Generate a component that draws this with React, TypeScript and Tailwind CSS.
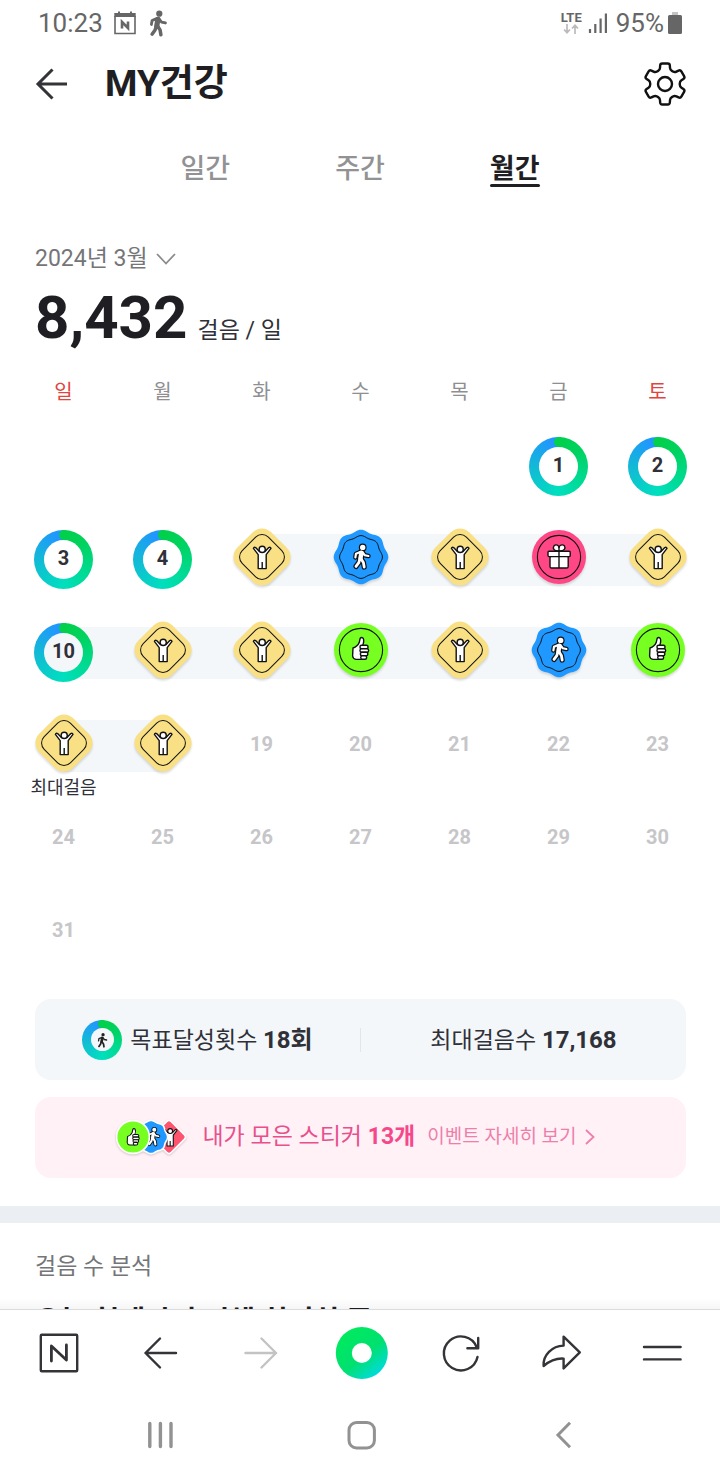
import React, { useState } from "react";

type StickerName = "cheer" | "walk" | "thumb" | "gift";
type Point = [number, number];

interface DayItem {
  day: number;
  ring?: boolean;
  sticker?: StickerName;
  band?: "left" | "right" | "full";
  label?: string;
}

const weekdays = ["일", "월", "화", "수", "목", "금", "토"];

const weeks: (DayItem | null)[][] = [
  [null, null, null, null, null, { day: 1, ring: true }, { day: 2, ring: true }],
  [
    { day: 3, ring: true },
    { day: 4, ring: true },
    { day: 5, sticker: "cheer", band: "right" },
    { day: 6, sticker: "walk", band: "full" },
    { day: 7, sticker: "cheer", band: "full" },
    { day: 8, sticker: "gift", band: "full" },
    { day: 9, sticker: "cheer", band: "left" },
  ],
  [
    { day: 10, ring: true, band: "right" },
    { day: 11, sticker: "cheer", band: "full" },
    { day: 12, sticker: "cheer", band: "full" },
    { day: 13, sticker: "thumb", band: "full" },
    { day: 14, sticker: "cheer", band: "full" },
    { day: 15, sticker: "walk", band: "full" },
    { day: 16, sticker: "thumb", band: "left" },
  ],
  [
    { day: 17, sticker: "cheer", band: "right", label: "최대걸음" },
    { day: 18, sticker: "cheer", band: "left" },
    { day: 19 },
    { day: 20 },
    { day: 21 },
    { day: 22 },
    { day: 23 },
  ],
  [24, 25, 26, 27, 28, 29, 30].map((day) => ({ day })),
  [{ day: 31 }, null, null, null, null, null, null],
];

const bandClass = {
  left: "left-0 right-1/2",
  right: "left-1/2 right-0",
  full: "inset-x-0",
};

const polar = (radius: number, deg: number): Point => {
  const a = (deg * Math.PI) / 180;
  return [radius * Math.sin(a), -radius * Math.cos(a)];
};

const roundedPath = (points: Point[], cut: number) => {
  const n = points.length;
  const towards = (a: Point, b: Point): Point => {
    const len = Math.hypot(b[0] - a[0], b[1] - a[1]);
    const t = Math.min(cut / len, 0.5);
    return [a[0] + (b[0] - a[0]) * t, a[1] + (b[1] - a[1]) * t];
  };
  return (
    points
      .map((p, i) => {
        const from = towards(p, points[(i + n - 1) % n]);
        const to = towards(p, points[(i + 1) % n]);
        return `${i ? "L" : "M"}${from} Q${p} ${to}`;
      })
      .join(" ") + "Z"
  );
};

const gearPath = roundedPath(
  [0, 60, 120, 180, 240, 300].flatMap((a) => [
    polar(21, a - 13),
    polar(21, a + 13),
    polar(15, a + 20),
    polar(15, a + 40),
  ]),
  2
);

const flowerPath = (radius: number, wave: number) =>
  Array.from({ length: 120 }, (_, i) => polar(radius + wave * Math.cos((i * 24 * Math.PI) / 180), i * 3))
    .map((p, i) => `${i ? "L" : "M"}${p}`)
    .join(" ") + "Z";

const WalkerShape = ({ color, grow = 0 }: { color: string; grow?: number }) => (
  <g stroke={color} fill="none" strokeLinecap="round" strokeLinejoin="round">
    <circle cx="1.7" cy="-9.6" r={2.7 + grow} fill={color} stroke="none" />
    <path d="M0.4 -4.4L-0.6 1.6" strokeWidth={4.4 + grow * 2} />
    <path d="M-0.8 -5L-5 -3.2L-5.6 0.4M1.4 -4.8L3.8 -1.8L7.4 -1" strokeWidth={2.2 + grow * 2} />
    <path d="M-1.2 2L-2.2 5.6L-5 9.4M0.2 2L2.4 5.4L3.2 10" strokeWidth={2.8 + grow * 2} />
  </g>
);

const Walker = () => (
  <>
    <WalkerShape color="#111" grow={1.2} />
    <WalkerShape color="#fff" />
  </>
);

const Cheer = () => (
  <g fill="#fff" stroke="#111" strokeWidth="1.4" strokeLinejoin="round">
    <path d="M-8.6 -8.6Q-8 -10.4 -6.4 -9.4L-2.6 -5.4H3L6.8 -9.4Q8.4 -10.4 9 -8.6L4.2 -2.4V11.6H-3.8V-2.4Z" />
    <path d="M0.2 5V11.6" />
    <circle cx="0.2" cy="-7.6" r="3.1" />
  </g>
);

const Thumb = () => (
  <g fill="#fff" stroke="#111" strokeWidth="1.4" strokeLinejoin="round">
    <path d="M-8 -2Q-3.4 -3.4 -1.8 -7.4L-0.8 -11.8Q0.4 -13.2 2.2 -11.8Q3.4 -9.4 1.8 -4.6V9.4H-5Q-8 9 -8.4 6Z" />
    <rect x="-1" y="-4.8" width="8" height="3.6" rx="1.5" />
    <rect x="-1" y="-1.2" width="8.6" height="3.5" rx="1.5" />
    <rect x="-0.6" y="2.3" width="7.4" height="3.5" rx="1.5" />
    <rect x="-0.2" y="5.8" width="5.8" height="3.4" rx="1.5" />
  </g>
);

const Gift = () => (
  <g fill="#fff" stroke="#111" strokeWidth="1.4" strokeLinejoin="round">
    <path d="M0 -6C-5.6 -5.6 -6.4 -9 -5 -11.2C-3 -13 0 -11.8 0 -9.6C0 -11.8 3.4 -13 5.4 -11.2C6.8 -9 5.6 -5.6 0 -6Z" />
    <path d="M0 -11V-6" />
    <rect x="-9" y="-1" width="18.2" height="12" rx="1.6" />
    <rect x="-11" y="-5.8" width="22.2" height="5.4" rx="1" />
    <path d="M0 -5.8V11" />
  </g>
);

const StickerArt = ({ name }: { name: StickerName }) => {
  if (name === "cheer")
    return (
      <>
        <rect x="-24" y="-24" width="48" height="48" rx="13" fill="#f9e084" transform="rotate(45)" />
        <rect
          x="-18.5"
          y="-18.5"
          width="37"
          height="37"
          rx="9"
          fill="none"
          stroke="#111"
          transform="rotate(45)"
        />
        <Cheer />
      </>
    );
  if (name === "walk")
    return (
      <>
        <path d={flowerPath(26.2, 1.1)} fill="#1f98ff" />
        <path d={flowerPath(20.6, 0.8)} fill="none" stroke="#111" />
        <Walker />
      </>
    );
  return (
    <>
      <circle r="27" fill={name === "thumb" ? "#77ff22" : "#ff4785"} />
      <circle r="21.6" fill="none" stroke="#111" strokeWidth="1.1" />
      {name === "thumb" ? <Thumb /> : <Gift />}
    </>
  );
};

const Sticker = ({ name }: { name: StickerName }) => (
  <svg
    viewBox="-30 -30 60 60"
    className="relative mb-[6px] size-[60px] drop-shadow-[0_2px_1px_rgba(0,0,0,0.14)]"
    aria-hidden="true"
  >
    <StickerArt name={name} />
  </svg>
);

const ringFill =
  "relative flex items-center justify-center rounded-full bg-[conic-gradient(#00d04c_0deg,#00d25e_50deg,#00d98a_110deg,#00dfbe_180deg,#12b9d6_270deg,#2196ff_345deg,#2196ff_360deg)]";

const Ring = ({ day, tinted }: { day: number; tinted?: boolean }) => (
  <div className={`${ringFill} size-[59px]`}>
    <span className="absolute top-0 left-1/2 size-[10px] -translate-x-1/2 rounded-full bg-[#00d04c]" />
    <span
      className={`flex size-[39px] items-center justify-center rounded-full pb-[3px] text-xl font-bold text-[#303038] ${tinted ? "bg-[#f3f7fa]" : "bg-white"}`}
    >
      {day}
    </span>
  </div>
);

const Day = ({ item }: { item: DayItem | null }) => {
  if (!item) return null;
  return (
    <div className="relative flex h-full items-center justify-center">
      {item.band && <div className={`absolute h-[52px] bg-[#f3f7fa] ${bandClass[item.band]}`} />}
      {item.ring && <Ring day={item.day} tinted={!!item.band} />}
      {item.sticker && <Sticker name={item.sticker} />}
      {!item.ring && !item.sticker && (
        <span className="pb-1 text-xl font-bold text-[#c6c6c9]">{item.day}</span>
      )}
      {item.label && (
        <span className="absolute top-[79px] text-lg leading-5 whitespace-nowrap text-[#303038]">
          {item.label}
        </span>
      )}
    </div>
  );
};

const StatusBar = () => (
  <div className="flex h-[46px] shrink-0 items-center justify-between pr-[38px] pl-[38px] text-[26px] text-[#666]">
    <div className="flex items-center">
      <span>10:23</span>
      <svg viewBox="0 0 22 24" className="ml-[11px] h-6 w-[22px]" aria-hidden="true">
        <path d="M1 5V22.5H21V5" fill="none" stroke="#666" strokeWidth="1.6" />
        <path d="M0.3 2H4V0.5H6V2H16V0.5H18V2H21.7V6H0.3Z" fill="#666" />
        <path d="M8 17.5V11L14 17V10.5" fill="none" stroke="#666" strokeWidth="2.6" />
      </svg>
      <svg viewBox="-8 -13 17 25" className="ml-3 h-[27px] w-5" aria-hidden="true">
        <WalkerShape color="#666" grow={0.2} />
      </svg>
    </div>
    <div className="flex items-center">
      <div className="mr-[6px] flex flex-col items-center">
        <span className="text-[13px] leading-3 font-bold">LTE</span>
        <svg viewBox="0 0 16 10" className="h-[10px] w-4" fill="none" stroke="#bbb" strokeWidth="1.7" aria-hidden="true">
          <path d="M4 0V8.5M1 5.5L4 8.7L7 5.5M12 10V1.5M9 4.5L12 1.3L15 4.5" />
        </svg>
      </div>
      <svg viewBox="0 0 20 22" className="mr-2 h-[22px] w-5" stroke="#666" strokeWidth="2.2" aria-hidden="true">
        <path d="M2 21V17M7.3 21V12M12.6 21V6.5M17.9 21V1.5" />
      </svg>
      <span>95%</span>
      <svg viewBox="0 0 14 22" className="ml-1 h-[22px] w-[14px]" aria-hidden="true">
        <path d="M4 0H10V4H4Z" fill="#c4c4c4" />
        <rect y="3" width="14" height="19" rx="1.5" fill="#666" />
      </svg>
    </div>
  </div>
);

const Header = () => (
  <header className="flex h-[76px] shrink-0 items-center pr-[33px] pl-[34px]">
    <button type="button" aria-label="뒤로">
      <svg viewBox="0 0 34 34" className="size-[34px]" fill="none" stroke="#333338" strokeWidth="3" aria-hidden="true">
        <path d="M33 17H4M18.5 2.5L4 17L18.5 31.5" />
      </svg>
    </button>
    <h1 className="ml-[37px] text-[37px] leading-10 font-bold text-[#1e1e23]">MY건강</h1>
    <button type="button" aria-label="설정" className="ml-auto">
      <svg viewBox="-22 -22 44 44" className="size-11" fill="none" stroke="#111" strokeWidth="2.4" aria-hidden="true">
        <path d={gearPath} />
        <circle r="7" />
      </svg>
    </button>
  </header>
);

const Tabs = () => {
  const [active, setActive] = useState("월간");
  return (
    <nav className="flex h-[90px] items-center justify-center gap-[105px]">
      {["일간", "주간", "월간"].map((tab) => (
        <button
          key={tab}
          type="button"
          onClick={() => setActive(tab)}
          className={`relative pt-1 text-[27px] leading-8 ${active === tab ? "font-bold text-[#1e1e23]" : "font-medium text-[#929294]"}`}
        >
          {tab}
          {active === tab && (
            <span className="absolute inset-x-0 top-[35px] h-[3px] rounded-full bg-[#1e1e23]" />
          )}
        </button>
      ))}
    </nav>
  );
};

const Calendar = () => (
  <table className="mt-3 w-full table-fixed">
    <thead>
      <tr className="h-[60px]">
        {weekdays.map((name, i) => (
          <th
            key={name}
            scope="col"
            className={`pt-[3px] text-center text-xl font-normal ${i === 0 || i === 6 ? "text-[#e0443e]" : "text-[#8f8f91]"}`}
          >
            {name}
          </th>
        ))}
      </tr>
    </thead>
    <tbody>
      {weeks.map((week, w) => (
        <tr key={w}>
          {week.map((item, d) => (
            <td key={d} className="h-[93px] p-0">
              <Day item={item} />
            </td>
          ))}
        </tr>
      ))}
    </tbody>
  </table>
);

const StickerPile = () => (
  <svg
    viewBox="0 0 72 40"
    className="h-10 w-[72px] drop-shadow-[0_1px_1px_rgba(0,0,0,0.18)]"
    aria-hidden="true"
  >
    <g transform="translate(53 20)">
      <rect x="-12.5" y="-12.5" width="25" height="25" rx="3" fill="#ff5470" stroke="#fff" strokeWidth="1.6" transform="rotate(45)" />
      <g transform="translate(1 0) scale(0.78)">
        <Cheer />
      </g>
    </g>
    <g transform="translate(35 20)">
      <path d={flowerPath(16, 0.6)} fill="#1f98ff" stroke="#fff" strokeWidth="1.6" />
      <g transform="translate(2 0) scale(0.75)">
        <Walker />
      </g>
    </g>
    <circle cx="17" cy="20" r="16.4" fill="#77ff22" stroke="#fff" strokeWidth="1.6" />
    <g transform="translate(17.5 21) scale(0.75)">
      <Thumb />
    </g>
  </svg>
);

const Summary = () => (
  <section className="mt-[21px] mr-[34px] ml-[35px] flex flex-col gap-[17px] text-[23px] text-[#303038]">
    <div className="flex h-[81px] items-center rounded-2xl bg-[#f3f7fa]">
      <div className="flex flex-1 items-center justify-center">
        <span className={`${ringFill} mr-2 size-10`}>
          <span className="absolute top-0 left-1/2 size-2 -translate-x-1/2 rounded-full bg-[#00d04c]" />
          <span className="flex size-[23px] items-center justify-center rounded-full bg-[#f3f7fa]">
            <svg viewBox="-13 -14 26 26" className="size-4" aria-hidden="true">
              <WalkerShape color="#222" />
            </svg>
          </span>
        </span>
        <span className="pt-[2px] leading-7">
          목표달성횟수 <b className="text-2xl leading-7">18회</b>
        </span>
      </div>
      <div className="h-6 w-px bg-[#e2e6ea]" />
      <div className="flex-1 pt-[2px] text-center leading-7">
        최대걸음수 <b className="text-2xl leading-7">17,168</b>
      </div>
    </div>
    <a
      href="#stickers"
      className="flex h-[81px] items-center justify-center rounded-2xl bg-[#fff1f6] pr-[10px] pb-[2px] text-[#e8508c]"
    >
      <StickerPile />
      <span className="ml-[14px] leading-7">
        내가 모은 스티커 <b className="text-[#f5488a]">13개</b>
      </span>
      <span className="ml-3 text-[19px] leading-7 text-[#ee7fab]">이벤트 자세히 보기</span>
      <svg viewBox="0 0 10 16" className="ml-2 h-4 w-[10px]" fill="none" stroke="#ee7fab" strokeWidth="1.8" aria-hidden="true">
        <path d="M1 1L8.5 8L1 15" />
      </svg>
    </a>
  </section>
);

const browserItems = [
  {
    label: "네이버 홈",
    icon: (
      <g strokeWidth="2.4">
        <rect x="-18.2" y="-18.2" width="36.4" height="36.4" rx="1" />
        <path d="M-7.6 8V-7L7.4 7V-8" strokeWidth="2.8" />
      </g>
    ),
  },
  { label: "이전", icon: <path d="M16 0H-14.5M0 -14.5L-14.5 0L0 14.5" /> },
  { label: "다음", icon: <path d="M-14.5 0H16M1.5 -14.5L16 0L1.5 14.5" stroke="#c3c3c5" /> },
  {
    label: "그린닷",
    icon: (
      <g stroke="none">
        <defs>
          <linearGradient id="dot" x1="0.2" y1="0.1" x2="0.85" y2="0.9">
            <stop offset="0" stopColor="#00ea5e" />
            <stop offset="0.55" stopColor="#00e070" />
            <stop offset="1" stopColor="#00dbe0" />
          </linearGradient>
        </defs>
        <circle cx="0.8" r="26" fill="url(#dot)" />
        <circle cx="0.8" r="10" fill="#fff" />
      </g>
    ),
  },
  {
    label: "새로고침",
    icon: <path d="M15.5 4A17 17 0 1 1 14.6 -6M16.2 -15V-4.8H5.4" />,
  },
  {
    label: "공유",
    icon: (
      <path d="M1.6 -16.4L17.8 -0.6L1.6 15.4V5.6C-7 5 -12.5 8 -18.4 13C-19.2 2 -10 -7 1.6 -7.4Z" />
    ),
  },
  { label: "메뉴", icon: <path d="M-19 -6H17.6M-19 6.4H17.6" strokeWidth="2.4" /> },
];

const Footer = () => (
  <footer className="relative shrink-0 border-t border-[#e3e5e8] bg-white pb-[5px]">
    <div className="absolute inset-x-0 bottom-full h-3 bg-linear-to-b from-transparent to-black/4" />
    <nav className="grid h-[85px] grid-cols-7 items-center pr-[7px] pl-[9px]">
      {browserItems.map((item) => (
        <button key={item.label} type="button" aria-label={item.label} className="flex justify-center">
          <svg
            viewBox="-27 -27 54 54"
            className="size-[54px]"
            fill="none"
            stroke="#333338"
            strokeWidth="2.4"
            strokeLinecap="round"
            strokeLinejoin="round"
            aria-hidden="true"
          >
            {item.icon}
          </svg>
        </button>
      ))}
    </nav>
    <div className="grid h-20 grid-cols-3 items-center px-[58px]">
      <button type="button" aria-label="최근 앱" className="flex justify-center">
        <svg viewBox="-16 -16 32 32" className="size-8" stroke="#929292" strokeWidth="3.4" strokeLinecap="round" aria-hidden="true">
          <path d="M-9.2 -11.5V11.5M1.4 -11.5V11.5M12 -11.5V11.5" />
        </svg>
      </button>
      <button type="button" aria-label="홈" className="flex justify-center">
        <svg viewBox="-16 -16 32 32" className="size-8" fill="none" stroke="#929292" strokeWidth="3" aria-hidden="true">
          <rect x="-11" y="-12.5" width="25.4" height="25.4" rx="7.5" />
        </svg>
      </button>
      <button type="button" aria-label="뒤로 가기" className="flex justify-center">
        <svg viewBox="-16 -16 32 32" className="size-8" fill="none" stroke="#929292" strokeWidth="3" aria-hidden="true">
          <path d="M9 -12.2L-3 0L9 12.2" />
        </svg>
      </button>
    </div>
  </footer>
);

const App: React.FC = () => {
  const [month, setMonth] = useState("2024년 3월");

  return (
    <div className="flex h-screen flex-col overflow-hidden bg-white font-[Roboto,'Noto_Sans_CJK_KR',sans-serif]">
      <StatusBar />
      <Header />
      <main className="min-h-0 flex-1 overflow-y-auto [scrollbar-width:none]">
        <Tabs />
        <label className="mt-[31px] ml-[35px] flex h-8 w-fit items-center text-[#757578]">
          <select
            aria-label="월 선택"
            value={month}
            onChange={(e) => setMonth(e.target.value)}
            className="h-8 appearance-none text-[23px] leading-8 [field-sizing:content]"
          >
            <option>2024년 3월</option>
            <option>2024년 2월</option>
            <option>2024년 1월</option>
          </select>
          <svg viewBox="0 0 20 12" className="pointer-events-none ml-2 h-3 w-5" fill="none" stroke="#8b8b8e" strokeWidth="1.8" aria-hidden="true">
            <path d="M1 1L10 10.5L19 1" />
          </svg>
        </label>
        <p className="mt-[13px] ml-[35px] flex items-baseline text-[#1e1e23]">
          <strong className="text-6xl leading-[60px] font-bold">8,432</strong>
          <span className="ml-[10px] text-[23px] leading-8 text-[#303038]">걸음 / 일</span>
        </p>
        <div className="pr-[13px] pl-[14px]">
          <Calendar />
        </div>
        <Summary />
        <section className="mt-[28px] border-t-[17px] border-[#ebeef3] px-[35px] pt-[28px]">
          <p className="text-[23px] leading-8 text-[#757578]">걸음 수 분석</p>
          <h2 className="mt-[19px] text-[28px] leading-10 font-bold text-[#1e1e23]">
            오늘 현재까지 전체 최저치 중
          </h2>
        </section>
      </main>
      <Footer />
    </div>
  );
};

export default App;
